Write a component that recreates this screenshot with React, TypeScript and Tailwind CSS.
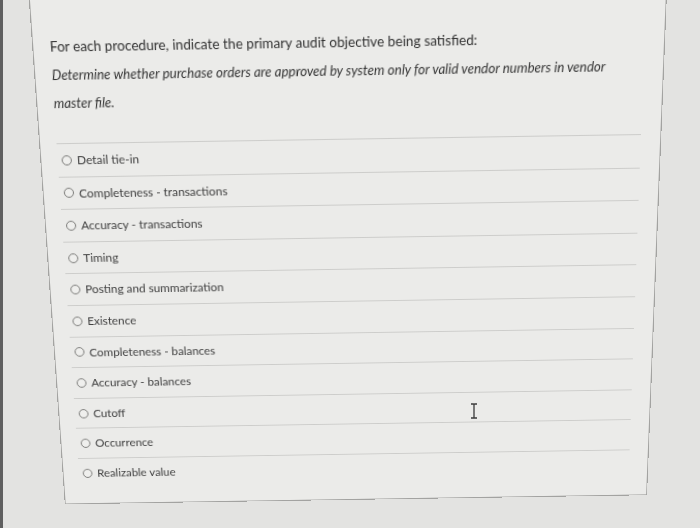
import React from 'react';

const options = [
  'Detail tie-in',
  'Completeness - transactions',
  'Accuracy - transactions',
  'Timing',
  'Posting and summarization',
  'Existence',
  'Completeness - balances',
  'Accuracy - balances',
  'Cutoff',
  'Occurrence',
  'Realizable value',
];

function TextCursor() {
  return (
    <svg width="8" height="16" viewBox="0 0 8 16" className="absolute left-[470px] top-[403px]">
      <path d="M1 1h2.2c.5 0 .8.3.8.8M7 1H4.8c-.5 0-.8.3-.8.8v12.4c0 .5-.3.8-.8.8H1M7 15H4.8c-.5 0-.8-.3-.8-.8" fill="none" stroke="#3b3b3b" strokeWidth="1.3" />
    </svg>
  );
}

export default function App() {
  return (
    <div className="relative flex h-[528px] w-[700px] overflow-hidden bg-[#e3e3e1] font-['Lato','Liberation_Sans',sans-serif]">
      <div className="w-[3px] shrink-0 bg-[#5f5f5f]" />
      {/* card is photographed at an angle, so tilt it back a little */}
      <div className="ml-[44px] h-[516px] w-[610px] shrink-0 origin-[50%_250px] border border-[#a3a3a1] bg-[#ebebe9] pl-4 pr-[19px] pt-[33px] [transform:rotate(-0.9deg)_perspective(1000px)_rotateX(-10.3deg)]">
        <p className="text-[13.2px] leading-[24px] text-[#333333]">
          For each procedure, indicate the primary audit objective being satisfied:
        </p>
        <p className="mt-[2px] text-[13px] italic leading-[27px] text-[#363636]">
          Determine whether purchase orders are approved by system only for valid vendor numbers in vendor master file.
        </p>
        <ul className="mt-[25px]">
          {options.map((label) => (
            <li key={label} className="flex h-[32.6px] items-center border-t border-[#cdcdcb] pl-[4px]">
              <span className="h-[10px] w-[10px] shrink-0 rounded-full border border-[#7a7a78] bg-[#efefed]" />
              <span className="ml-[5px] text-[11.8px] text-[#404040]">{label}</span>
            </li>
          ))}
        </ul>
      </div>
      <TextCursor />
    </div>
  );
}
